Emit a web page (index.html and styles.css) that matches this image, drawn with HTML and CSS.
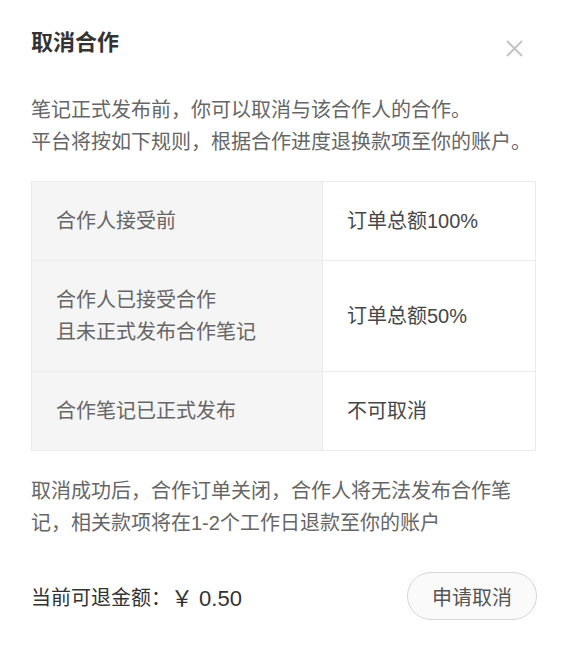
FILE: index.html
```html
<!DOCTYPE html>
<html lang="zh-CN">
<head>
<meta charset="utf-8">
<title>取消合作</title>
<link rel="stylesheet" href="styles.css">
</head>
<body>
<div class="dialog">
  <div class="header">
    <h1 class="title">取消合作</h1>
    <span class="close" aria-label="关闭">
      <svg width="17" height="17" viewBox="0 0 17 17"><path d="M1 1 L16 16 M16 1 L1 16" stroke="#c4c4c4" stroke-width="2" fill="none"/></svg>
    </span>
  </div>
  <p class="intro">笔记正式发布前，你可以取消与该合作人的合作。<br>平台将按如下规则，根据合作进度退换款项至你的账户。</p>
  <table class="rules">
    <tr><td class="cond">合作人接受前</td><td class="res">订单总额100%</td></tr>
    <tr><td class="cond">合作人已接受合作<br>且未正式发布合作笔记</td><td class="res">订单总额50%</td></tr>
    <tr><td class="cond">合作笔记已正式发布</td><td class="res">不可取消</td></tr>
  </table>
  <p class="note">取消成功后，合作订单关闭，合作人将无法发布合作笔记，相关款项将在1-2个工作日退款至你的账户</p>
  <div class="footer">
    <div class="amount"><span class="label">当前可退金额：</span><span class="value">￥ 0.50</span></div>
    <button class="btn">申请取消</button>
  </div>
</div>
</body>
</html>
```

FILE: styles.css
```css
* { box-sizing: border-box; }
html, body { margin: 0; padding: 0; background: #fff; }
body {
  font-family: "Liberation Sans", "Noto Sans CJK SC", sans-serif;
  color: #666;
}
.dialog {
  padding: 27px 32px 0 31px;
}
.header {
  display: flex;
  justify-content: space-between;
  align-items: flex-start;
}
.title {
  margin: 0;
  font-size: 22px;
  line-height: 32px;
  font-weight: 700;
  color: #333;
}
.close {
  display: block;
  width: 17px;
  height: 17px;
  margin-top: 13px;
  margin-right: 13px;
}
.close svg { display: block; }
.intro {
  margin: 35px 0 0;
  font-size: 20px;
  line-height: 32px;
  color: #666;
}
.rules {
  margin-top: 23px;
  width: 505px;
  border-collapse: collapse;
  font-size: 20px;
  line-height: 32px;
}
.rules td {
  border: 1px solid #ebebeb;
  padding: 23px 24px;
  vertical-align: middle;
}
.rules .cond {
  width: 291px;
  background: #f5f5f5;
  color: #666;
}
.rules .res {
  background: #fff;
  color: #474747;
}
.note {
  margin: 24px 0 0;
  max-width: 492px;
  font-size: 20px;
  line-height: 32px;
  color: #666;
}
.footer {
  margin-top: 33px;
  display: flex;
  justify-content: space-between;
  align-items: center;
}
.amount {
  display: flex;
  align-items: center;
  color: #333;
}
.label { font-size: 20px; }
.value { font-size: 22px; }
.btn {
  width: 130px;
  height: 48px;
  border: 1px solid #d6d6d6;
  border-radius: 24px;
  background: #fafafa;
  color: #555;
  font-family: "Liberation Sans", "Noto Sans CJK SC", sans-serif;
  font-size: 20px;
  padding: 0;
  margin-right: -1px;
}
```
